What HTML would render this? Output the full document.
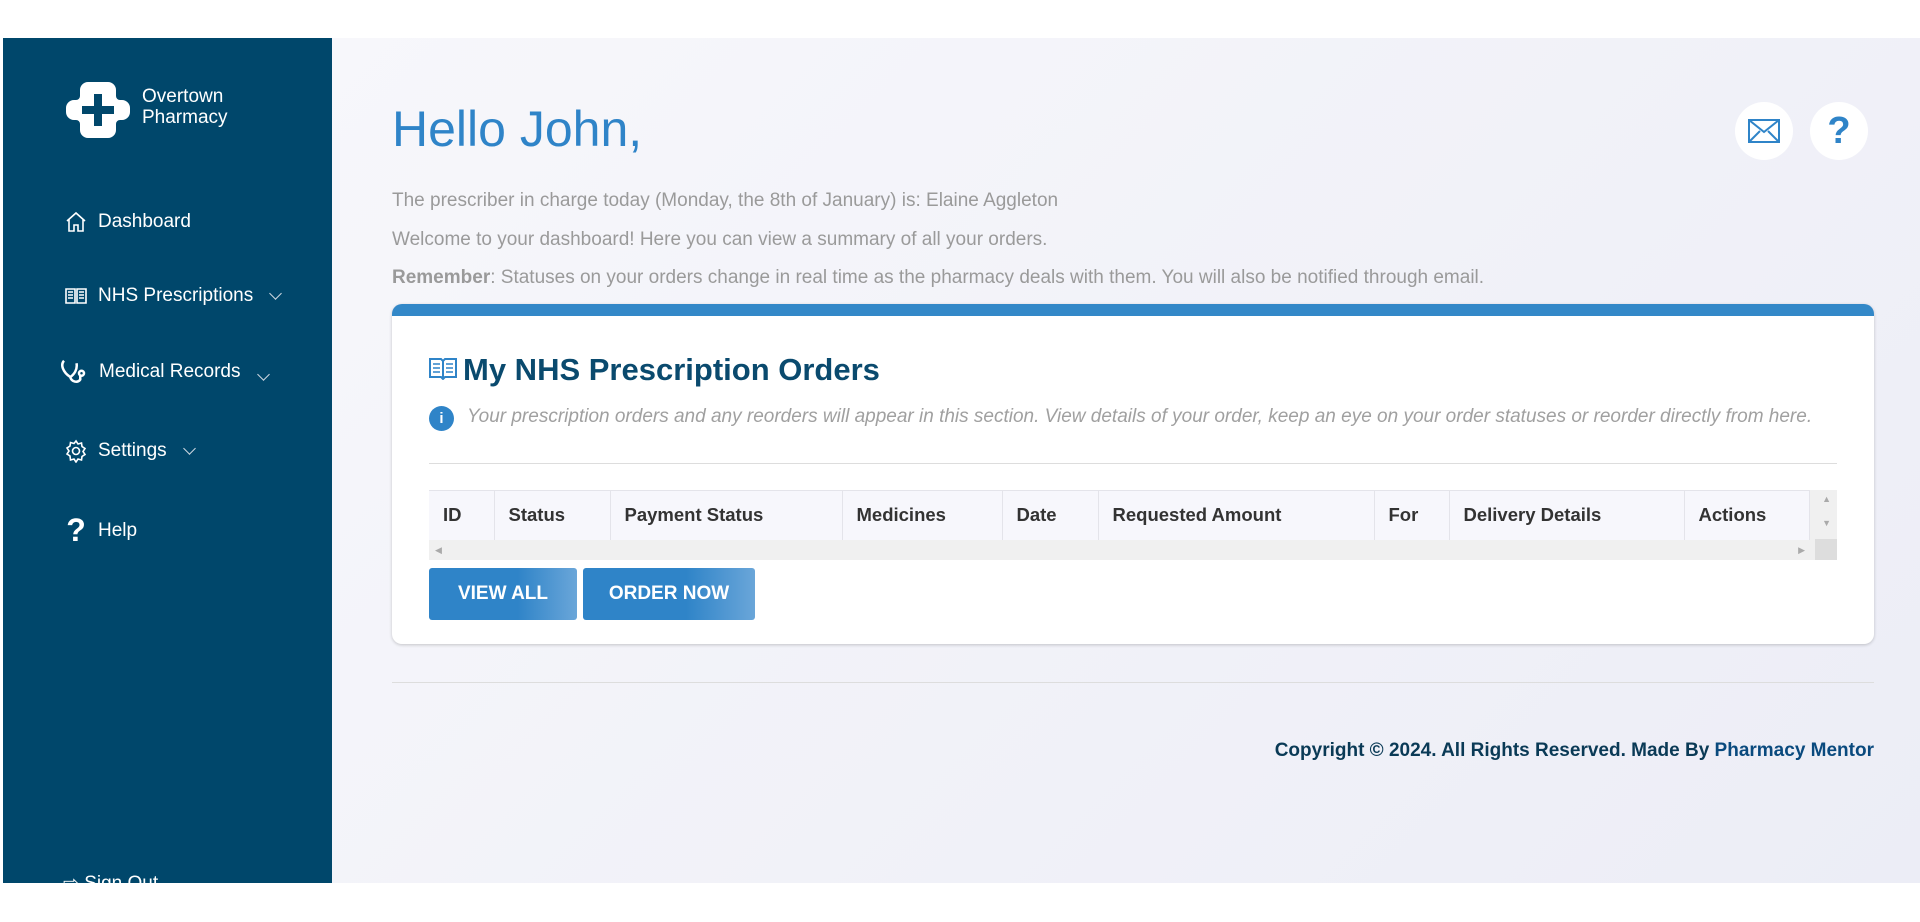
<!DOCTYPE html>
<html><head><meta charset="utf-8"><style>
*{margin:0;padding:0;box-sizing:border-box}
body{width:1920px;height:922px;background:#fff;font-family:"Liberation Sans",sans-serif;position:relative;overflow:hidden}
.side{position:absolute;left:3px;top:38px;width:329px;height:845px;background:#00476b;color:#fff;overflow:hidden}
.main{position:absolute;left:332px;top:38px;width:1588px;height:845px;background:linear-gradient(135deg,#f7f7fb,#ecedf6)}
.item{position:absolute;left:61px;font-size:19px;display:flex;align-items:center;gap:10px}
.item svg{width:24px;height:24px}
.chev{display:inline-block;width:9px;height:9px;border-right:1.6px solid #cfd9e2;border-bottom:1.6px solid #cfd9e2;transform:rotate(45deg);margin-left:8px;margin-top:-6px}
.abs{position:absolute}
.txt{position:absolute;left:60px;font-size:19px;color:#9a9a9a}
.card{position:absolute;left:60px;top:266px;width:1482px;height:340px;background:#fff;border-radius:10px;border-top:12px solid #3388c8;box-shadow:0 1px 3px rgba(0,0,0,.2)}
th{font-weight:bold;font-size:18.5px;color:#333;text-align:left;padding-left:14px;border-right:1px solid #e4e4ea;height:49px}
.btn{position:absolute;top:252px;height:52px;border-radius:3px;background:linear-gradient(90deg,#2f84c8 60%,#6aa6d9);color:#fff;font-weight:bold;font-size:19px;display:flex;align-items:center;justify-content:center}
.circ{position:absolute;top:64px;width:58px;height:58px;border-radius:50%;background:#fff;display:flex;align-items:center;justify-content:center;color:#2f84c8}
.sb{position:absolute;font-size:9px;color:#aaa}
</style></head><body>
<div class="side">
 <svg class="abs" style="left:63px;top:40px" width="64" height="64" viewBox="0 0 64 64"><path d="M22 4h20a8 8 0 0 1 8 8v6a4 4 0 0 0 4 4h2a8 8 0 0 1 8 8v4a8 8 0 0 1-8 8h-2a4 4 0 0 0-4 4v6a8 8 0 0 1-8 8H22a8 8 0 0 1-8-8v-6a4 4 0 0 0-4-4H8a8 8 0 0 1-8-8v-4a8 8 0 0 1 8-8h2a4 4 0 0 0 4-4v-6a8 8 0 0 1 8-8z" fill="#fff"/><path d="M28 16h8v12h12v8H36v12h-8V36H16v-8h12z" fill="#00476b"/></svg>
 <div class="abs" style="left:139px;top:48px;font-size:19px;line-height:21px">Overtown<br>Pharmacy</div>
 <div class="item" style="top:172px"><svg viewBox="0 0 24 24" fill="none" stroke="#fff" stroke-width="1.6"><path d="M3 11l9-8 9 8M5 9v12h5v-6h4v6h5V9"/></svg>Dashboard</div>
 <div class="item" style="top:246px"><svg viewBox="0 0 24 24" fill="none" stroke="#fff" stroke-width="1.6"><path d="M2 5h9v14H2zM13 5h9v14h-9zM4 8h5M4 11h5M4 14h5M15 8h5M15 11h5M15 14h5"/></svg>NHS Prescriptions<span class="chev"></span></div>
 <div class="item" style="top:319px;left:56px"><svg viewBox="0 0 24 24" fill="none" stroke="#fff" stroke-width="2" style="width:30px;height:30px"><path d="M4 3C1 6 3 12 9 16c3-2 6-6 5-11M9 16c1 4 6 5 8 2v-3"/><circle cx="18" cy="13" r="2"/></svg>Medical Records<span class="chev" style="margin-top:4px"></span></div>
 <div class="item" style="top:401px"><svg viewBox="0 0 24 24" fill="none" stroke="#fff" stroke-width="1.6"><circle cx="12" cy="12" r="3.5"/><path d="M12 2l2 3 3.5-1 .5 3.5 3 2-2 3 2 3-3 2-.5 3.5-3.5-1-2 3-2-3-3.5 1L6 17l-3-2 2-3-2-3 3-2 .5-3.5 3.5 1z"/></svg>Settings<span class="chev"></span></div>
 <div class="item" style="top:474px"><span style="font-size:32px;font-weight:bold;width:24px;text-align:center">?</span>Help</div>
 <div class="item" style="top:834px;left:60px">⇨ Sign Out</div>
</div>
<div class="main">
 <div class="abs" style="left:60px;top:62px;font-size:50px;color:#2f84c8">Hello John,</div>
 <div class="circ" style="left:1403px"><svg width="32" height="24" viewBox="0 0 32 24" fill="none" stroke="#2f84c8" stroke-width="2"><rect x="1" y="1" width="30" height="22"/><path d="M1 1l15 12 15-12M1 23l11-11M31 23L20 12"/></svg></div>
 <div class="circ" style="left:1478px;font-size:38px;font-weight:bold">?</div>
 <div class="txt" style="top:152px">The prescriber in charge today (Monday, the 8th of January) is: Elaine Aggleton</div>
 <div class="txt" style="top:191px">Welcome to your dashboard! Here you can view a summary of all your orders.</div>
 <div class="txt" style="top:229px"><b>Remember</b>: Statuses on your orders change in real time as the pharmacy deals with them. You will also be notified through email.</div>
 <div class="card">
  <svg class="abs" style="left:37px;top:40px" width="28" height="24" viewBox="0 0 28 24" fill="none" stroke="#2f84c8" stroke-width="2"><path d="M1 3h11l2 2 2-2h11v18H16l-2 2-2-2H1z M14 5v18"/><path d="M4 8h7M4 12h7M4 16h7M17 8h7M17 12h7M17 16h7" stroke-width="1.5"/></svg>
  <div class="abs" style="left:71px;top:36px;font-size:31px;font-weight:bold;color:#0a4a6e">My NHS Prescription Orders</div>
  <div class="abs" style="left:37px;top:90px;width:25px;height:25px;border-radius:50%;background:#2f84c8;color:#fff;font-size:15px;font-weight:bold;text-align:center;line-height:25px">i</div>
  <div class="abs" style="left:75px;top:90px;font-size:19px;font-style:italic;color:#a0a0a0">Your prescription orders and any reorders will appear in this section. View details of your order, keep an eye on your order statuses or reorder directly from here.</div>
  <div class="abs" style="left:37px;top:147px;width:1408px;height:1px;background:#ddd"></div>
  <div class="abs" style="left:37px;top:174px;width:1408px;height:70px;background:#f0f0f0">
   <table style="border-collapse:collapse;width:1381px;background:#f7f7fc;border-top:1px solid #e4e4ea"><tr>
    <th style="width:65px">ID</th><th style="width:116px">Status</th><th style="width:232px">Payment Status</th><th style="width:160px">Medicines</th><th style="width:96px">Date</th><th style="width:276px">Requested Amount</th><th style="width:75px">For</th><th style="width:235px">Delivery Details</th><th>Actions</th></tr></table>
   <div class="abs" style="right:0;top:0;width:22px;height:70px;background:#f0f0f0"></div>
   <div class="abs" style="right:0;top:49px;width:22px;height:21px;background:#ddd"></div>
   <span class="sb" style="right:6px;top:4px">▲</span><span class="sb" style="right:6px;top:28px">▼</span>
   <span class="sb" style="left:6px;top:55px">◀</span><span class="sb" style="right:32px;top:55px">▶</span>
  </div>
  <div class="btn" style="left:37px;width:148px">VIEW ALL</div>
  <div class="btn" style="left:191px;width:172px">ORDER NOW</div>
 </div>
 <div class="abs" style="left:60px;top:644px;width:1482px;height:1px;background:#ddd"></div>
 <div class="abs" style="right:46px;top:702px;font-size:19px;font-weight:bold;color:#0a3a56">Copyright © 2024. All Rights Reserved. Made By <span style="color:#0a4a7e">Pharmacy Mentor</span></div>
</div>
</body></html>
